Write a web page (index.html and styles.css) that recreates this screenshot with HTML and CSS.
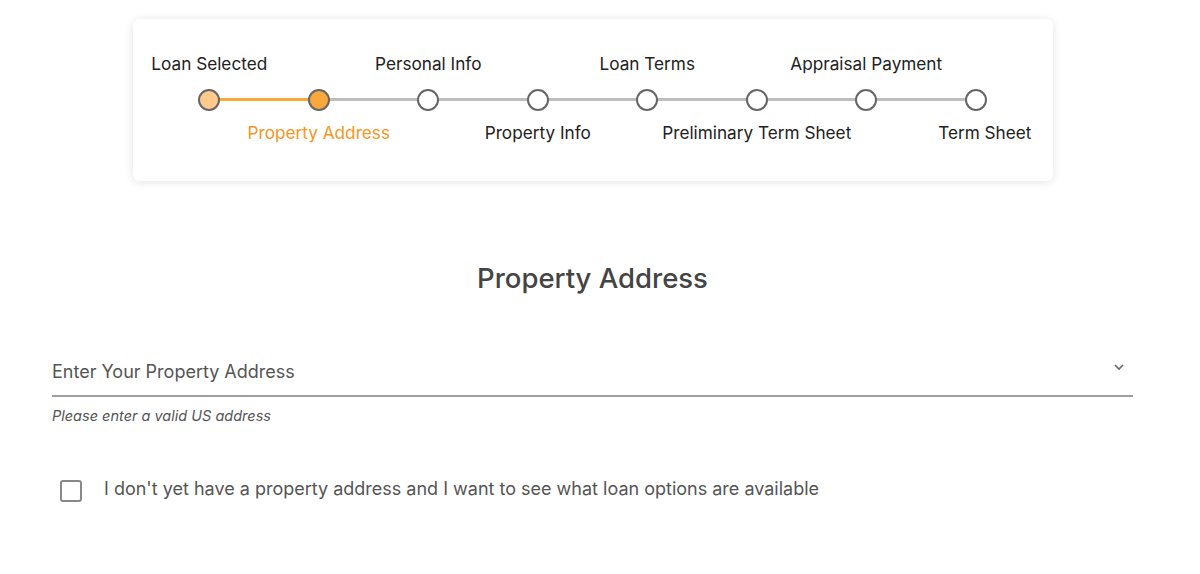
FILE: index.html
```html
<!DOCTYPE html>
<html lang="en">
<head>
    <meta charset="UTF-8">
    <meta name="viewport" content="width=device-width, initial-scale=1.0">
    <title>Property Address</title>
    <link rel="stylesheet" href="styles.css">
</head>
<body>
    <div class="page">
      <div class="stepper">
        <div class="step done up"><span class="label">Loan Selected</span><span class="dot"></span></div>
        <div class="step active down filled"><span class="label">Property Address</span><span class="dot"></span></div>
        <div class="step up"><span class="label">Personal Info</span><span class="dot"></span></div>
        <div class="step down"><span class="label">Property Info</span><span class="dot"></span></div>
        <div class="step up"><span class="label">Loan Terms</span><span class="dot"></span></div>
        <div class="step down"><span class="label">Preliminary Term Sheet</span><span class="dot"></span></div>
        <div class="step up"><span class="label">Appraisal Payment</span><span class="dot"></span></div>
        <div class="step down last"><span class="label">Term Sheet</span><span class="dot"></span></div>
      </div>

      <h1 class="title">Property Address</h1>

      <div class="address_field">
        <div class="select">
          <span class="placeholder">Enter Your Property Address</span>
          <svg class="chevron" width="12" height="8" viewBox="0 0 12 8"><path d="M2 2l4 4 4-4" fill="none" stroke="#666" stroke-width="1.6"/></svg>
        </div>
        <div class="hint">Please enter a valid US address</div>
      </div>

      <label class="no_address">
        <span class="box"></span>
        <span>I don't yet have a property address and I want to see what loan options are available</span>
      </label>
    </div>
</body>
</html>
```

FILE: styles.css
```css
body{
    margin: 0;
    background: #fff;
    font-family: Inter, "Open Sans", sans-serif;
    color: #222;
}
.page{
    width: 1081px;
    margin-left: 52px;
    padding-top: 19px;
}

/* 步骤条 */
.stepper{
    width: 876px;
    height: 162px;
    margin: 0 auto;
    padding: 0 22px;
    display: grid;
    grid-template-columns: repeat(8, 1fr);
    background: #fff;
    border-radius: 6px;
    box-shadow: 0 1px 8px rgba(0, 0, 0, 0.12);
}
.step{
    position: relative;
    display: flex;
    flex-direction: column;
    align-items: center;
    padding-top: 70px;
}
.step::after{
    content: "";
    position: absolute;
    top: 79px;
    left: 50%;
    width: 100%;
    height: 3px;
    background: #bdbdbd;
}
.step.done::after{
    background: #f9a735;
}
.step.last::after{
    display: none;
}
.dot{
    position: relative;
    z-index: 1;
    width: 18px;
    height: 18px;
    border: 2px solid #666;
    border-radius: 50%;
    background: #fff;
}
.step.done .dot{
    background: #ffcb8d;
}
.step.filled .dot{
    background: #f9a83c;
}
.label{
    position: absolute;
    white-space: nowrap;
    font-size: 17.2px;
    color: #222;
}
.step.up .label{
    top: 34px;
}
.step.down .label{
    top: 103px;
}
.step.last .label{
    margin-left: 18px;
}
.step.active .label{
    color: #f7951d;
}

.title{
    margin: 80px 0 0;
    text-align: center;
    font-size: 27.5px;
    font-weight: 500;
    color: #444;
}

.address_field{
    margin-top: 56px;
}
.select{
    display: flex;
    align-items: center;
    justify-content: space-between;
    height: 44px;
    border-bottom: 2px solid #9e9e9e;
}
.placeholder{
    font-size: 18px;
    color: #555;
    padding-bottom: 4px;
}
.chevron{
    margin-right: 8px;
    margin-bottom: 12px;
}
.hint{
    margin-top: 10px;
    font-size: 14.5px;
    font-style: italic;
    color: #555;
}

.no_address{
    display: flex;
    align-items: center;
    gap: 22px;
    margin-top: 50px;
    padding-left: 8px;
    font-size: 18px;
    color: #555;
}
.no_address .box{
    width: 18px;
    height: 18px;
    border: 2px solid #888;
    border-radius: 3px;
    margin-top: 6px;
}
```
